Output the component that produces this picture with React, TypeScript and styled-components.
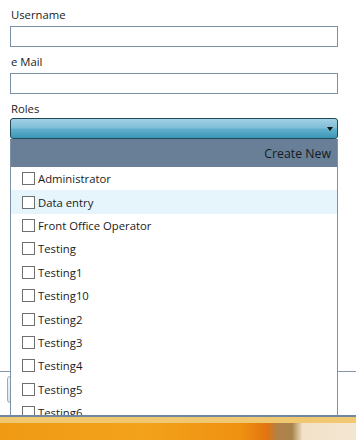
import React from 'react';
import styled, { createGlobalStyle } from 'styled-components';

const GlobalStyle = createGlobalStyle`
  html, body { margin: 0; padding: 0; background: #fff; }
  body { font-family: 'Open Sans', 'Noto Sans', sans-serif; }
`;

const Screen = styled.div`
  width: 356px;
  height: 440px;
  display: flex;
  flex-direction: column;
  overflow: hidden;
`;

const Window = styled.div`
  flex: 0 0 415px;
  display: flex;
  flex-direction: column;
  background: #fff;
`;

const Form = styled.div`
  flex: 1;
  padding: 0 18px 0 10px;
`;

const Label = styled.div<{ $h?: number }>`
  height: ${p => p.$h || 26}px;
  box-sizing: border-box;
  padding: 7px 0 0 1px;
  font-size: 11.3px;
  line-height: 16px;
  color: #1b1b1b;
`;

const Input = styled.input`
  display: block;
  width: 328px;
  height: 21px;
  box-sizing: border-box;
  border: 1px solid #7a8ea5;
  outline: none;
  margin: 0;
  padding: 0 4px;
  font-family: inherit;
  font-size: 12px;
`;

const ComboWrap = styled.div`
  position: relative;
  width: 328px;
`;

const Combo = styled.div`
  height: 21px;
  box-sizing: border-box;
  border: 1px solid #1f4a58;
  border-radius: 3px;
  background: linear-gradient(#a3d0e3 0%, #80bfd8 45%, #5fafcc 55%, #3b96b7 100%);
  display: flex;
  align-items: center;
  justify-content: flex-end;
  padding-right: 4px;
`;

const Arrow = styled.span`
  width: 0;
  height: 0;
  border-left: 3.5px solid transparent;
  border-right: 3.5px solid transparent;
  border-top: 4px solid #111;
`;

const Popup = styled.div`
  position: absolute;
  top: 21px;
  left: 0;
  width: 328px;
  height: 276px;
  box-sizing: border-box;
  border-left: 1px solid #7d91a8;
  border-right: 1px solid #7d91a8;
  background: #fff;
  display: flex;
  flex-direction: column;
  overflow: hidden;
  z-index: 5;
`;

const PopupHeader = styled.div`
  flex: 0 0 28px;
  background: #687f97;
  display: flex;
  align-items: center;
  justify-content: flex-end;
  padding-right: 6px;
  font-size: 12.3px;
  color: #141c24;
`;

const List = styled.div`
  flex: 1;
  overflow: hidden;
`;

const Row = styled.div<{ $hover?: boolean }>`
  height: 23.4px;
  display: flex;
  align-items: center;
  padding-left: 11px;
  background: ${p => (p.$hover ? '#e6f4fc' : 'transparent')};
  font-size: 11.3px;
  color: #1b1b1b;
`;

const Box = styled.span`
  width: 11px;
  height: 11px;
  border: 1px solid #6f6f6f;
  background: #fff;
  margin-right: 3px;
  flex: 0 0 auto;
`;

const Footer = styled.div`
  flex: 0 0 44px;
  border-top: 1px solid #8195ab;
  padding: 4px 7px 0;
  box-sizing: border-box;
`;

const Button = styled.button`
  width: 80px;
  height: 27px;
  border: 1px solid #a9a9a9;
  border-radius: 3px;
  background: linear-gradient(#f4f4f4, #e2e2e2);
`;

const Desktop = styled.div`
  flex: 1;
  display: flex;
  flex-direction: column;
  border-top: 2px solid #6f87a1;
`;

const Band = styled.div`
  flex: 0 0 6px;
  background: #f0c872;
`;

const Wallpaper = styled.div`
  flex: 1;
  background: linear-gradient(90deg, #f09a14 0%, #f3a21c 40%, #ef9010 68%, #e27410 75%, #b0824a 78%, #a8844c 82%, #f2e2c8 85%, #f3e6d2 100%);
`;

const roles = [
  'Administrator',
  'Data entry',
  'Front Office Operator',
  'Testing',
  'Testing1',
  'Testing10',
  'Testing2',
  'Testing3',
  'Testing4',
  'Testing5',
  'Testing6',
];

export default function App() {
  return (
    <>
      <GlobalStyle />
      <Screen>
        <Window>
          <Form>
            <Label>Username</Label>
            <Input />
            <Label>e Mail</Label>
            <Input />
            <Label $h={24}>Roles</Label>
            <ComboWrap>
              <Combo>
                <Arrow />
              </Combo>
              <Popup>
                <PopupHeader>Create New</PopupHeader>
                <List>
                  {roles.map((r, i) => (
                    <Row key={r} $hover={i === 1}>
                      <Box />
                      {r}
                    </Row>
                  ))}
                </List>
              </Popup>
            </ComboWrap>
          </Form>
          <Footer>
            <Button aria-label="action" />
          </Footer>
        </Window>
        <Desktop>
          <Band />
          <Wallpaper />
        </Desktop>
      </Screen>
    </>
  );
}
